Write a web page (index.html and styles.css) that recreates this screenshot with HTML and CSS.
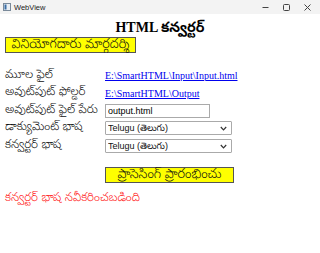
FILE: index.html
```html
<!DOCTYPE html>
<html lang="te">
<head>
    <meta charset="UTF-8">
    <title>WebView</title>
    <link rel="stylesheet" href="styles.css">
</head>
<body>

    <div class="titlebar">
        <div class="app">
            <svg class="app-icon" width="8" height="8" viewBox="0 0 8 8">
                <rect x="0.5" y="0.5" width="7" height="7" fill="#e8eef4" stroke="#7a8a9a"/>
                <rect x="1.5" y="1.5" width="2" height="5" fill="#3a6ea5"/>
            </svg>
            <span>WebView</span>
        </div>
        <div class="controls">
            <span class="ctl"><svg width="7" height="7" viewBox="0 0 7 7"><line x1="0.5" y1="3.5" x2="6.5" y2="3.5" stroke="#444"/></svg></span>
            <span class="ctl"><svg width="7" height="7" viewBox="0 0 7 7"><rect x="0.5" y="0.5" width="6" height="6" rx="1" fill="none" stroke="#444"/></svg></span>
            <span class="ctl"><svg width="7" height="7" viewBox="0 0 7 7"><path d="M0.5 0.5 L6.5 6.5 M6.5 0.5 L0.5 6.5" stroke="#444"/></svg></span>
        </div>
    </div>

    <div class="page">
        <h1>HTML కన్వర్టర్</h1>
        <button class="yellow guide">వినియోగదారు మార్గదర్శి</button>

        <table class="form">
            <tr>
                <td class="label">మూల ఫైల్</td>
                <td><a href="#">E:\SmartHTML\Input\Input.html</a></td>
            </tr>
            <tr>
                <td class="label">అవుట్‌పుట్ ఫోల్డర్</td>
                <td><a href="#">E:\SmartHTML\Output</a></td>
            </tr>
            <tr>
                <td class="label">అవుట్‌పుట్ ఫైల్ పేరు</td>
                <td><input type="text" value="output.html"></td>
            </tr>
            <tr>
                <td class="label">డాక్యుమెంట్ భాష</td>
                <td>
                    <span class="pick">
                        <select><option>Telugu (తెలుగు)</option></select>
                        <svg class="chev" width="7" height="5" viewBox="0 0 7 5"><path d="M0.8 1 L3.5 3.8 L6.2 1" fill="none" stroke="#333" stroke-width="1.2"/></svg>
                    </span>
                </td>
            </tr>
            <tr>
                <td class="label">కన్వర్టర్ భాష</td>
                <td>
                    <span class="pick">
                        <select><option>Telugu (తెలుగు)</option></select>
                        <svg class="chev" width="7" height="5" viewBox="0 0 7 5"><path d="M0.8 1 L3.5 3.8 L6.2 1" fill="none" stroke="#333" stroke-width="1.2"/></svg>
                    </span>
                </td>
            </tr>
        </table>

        <div class="start">
            <button class="yellow go">ప్రాసెసింగ్ ప్రారంభించు</button>
        </div>

        <p class="status">కన్వర్టర్ భాష నవీకరించబడింది</p>
    </div>

</body>
</html>
```

FILE: styles.css
```css
body {
    margin: 0;
    background: #ffffff;
    font-family: "Liberation Serif", "Noto Sans Telugu", serif;
}
.titlebar {
    height: 14px;
    background: #f3f3f3;
    display: flex;
    justify-content: space-between;
    align-items: center;
    font-family: "Segoe UI", "Liberation Sans", sans-serif;
    font-size: 7.5px;
    color: #222;
}
.app {
    display: flex;
    align-items: center;
    gap: 3px;
    padding-left: 3px;
}
.controls {
    display: flex;
    padding-right: 2px;
}
.ctl {
    width: 21px;
    display: flex;
    justify-content: center;
}
.page {
    padding: 0 5px;
}
h1 {
    margin: 6px 0 1px;
    line-height: 16px;
    text-align: center;
    font-size: 14px;
}
.yellow {
    display: block;
    background: #ffff00;
    border: 1px solid #555;
    font-family: "Noto Sans Telugu", "Liberation Sans", sans-serif;
    font-weight: 300;
    font-size: 13px;
    padding: 0;
    height: 16px;
    line-height: 15px;
    color: #111;
}
.guide {
    width: 131px;
}
.go {
    width: 129px;
}
.form {
    margin-top: 14px;
    border-collapse: collapse;
}
.form td {
    padding: 0;
    height: 17.5px;
    font-size: 12px;
}
.form .label {
    width: 100px;
    font-family: "Noto Sans Telugu", sans-serif;
    font-weight: 300;
    color: #111;
}
.form a {
    color: #0000ee;
    font-size: 10px;
}
.form input {
    display: block;
    box-sizing: border-box;
    width: 105px;
    height: 14px;
    font-size: 9px;
    padding: 0 2px;
    border: 1px solid #aaa;
    font-family: "Liberation Sans", sans-serif;
}
.pick {
    position: relative;
    display: block;
    width: 127px;
}
.pick select {
    display: block;
    box-sizing: border-box;
    appearance: none;
    width: 127px;
    height: 14px;
    font-size: 9px;
    padding: 0 2px;
    border: 1px solid #aaa;
    border-radius: 1px;
    background: #fff;
    color: #111;
    font-family: "Liberation Sans", "Noto Sans Telugu", sans-serif;
}
.chev {
    position: absolute;
    right: 5px;
    top: 5px;
}
.start {
    margin-top: 12px;
    padding-left: 100px;
}
.status {
    margin: 8px 0 0;
    color: #ff2020;
    font-family: "Noto Sans Telugu", sans-serif;
    font-weight: 300;
    font-size: 12px;
}
```
